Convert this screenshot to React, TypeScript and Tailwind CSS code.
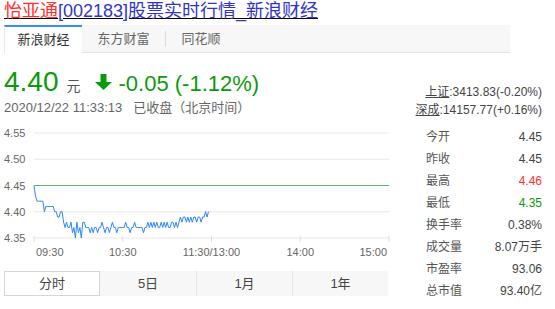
import React from "react";

const GREEN = "#0b9a0b";

// minute prices, cents below 4.45 (09:30 → ~11:29)
const drops = [
  0, 2, 3, 3, 3, 3, 3, 5, 4, 4,
  4, 4, 4, 4, 5, 5, 6, 6, 5, 5,
  7, 8, 7, 8, 8, 7, 9, 8, 10, 7,
  9, 8, 10, 7, 7, 8, 8, 8, 9, 8,
  9, 8, 8, 9, 8, 8, 7, 8, 9, 8,
  8, 9, 8, 7, 8, 8, 9, 8, 8, 8,
  8, 8, 7, 8, 8, 9, 8, 8, 7, 8,
  8, 8, 8, 8, 9, 8, 8, 7, 8, 7,
  8, 7, 8, 7, 8, 8, 7, 8, 7, 8,
  7, 8, 8, 7, 7, 8, 7, 8, 7, 6,
  7, 6, 6, 7, 6, 7, 6, 7, 6, 6,
  7, 6, 6, 7, 6, 6, 5, 6, 5,
];

const X0 = 34;
const X1 = 389;
const yOf = (p: number) => 13 + ((4.55 - p) / 0.05) * 26.25;
const xOf = (m: number) => X0 + (m * (X1 - X0)) / 240;

const stats: { label: string; value: string; color?: string }[] = [
  { label: "今开", value: "4.45" },
  { label: "昨收", value: "4.45" },
  { label: "最高", value: "4.46", color: "text-[#ff3030]" },
  { label: "最低", value: "4.35", color: "text-[#0b9a0b]" },
  { label: "换手率", value: "0.38%" },
  { label: "成交量", value: "8.07万手" },
  { label: "市盈率", value: "93.06" },
  { label: "总市值", value: "93.40亿" },
];

function MinuteChart() {
  const pts = drops
    .map((d, i) => `${xOf(i).toFixed(1)},${yOf(4.45 - d / 100).toFixed(1)}`)
    .join(" ");
  const levels = [4.55, 4.5, 4.45, 4.4, 4.35];
  const ticks = [0, 60, 120, 180, 240].map(xOf);

  return (
    <svg width={390} height={140} className="mt-[3px] block">
      {levels.map((p) => (
        <g key={p}>
          <line
            x1={X0}
            x2={X1}
            y1={yOf(p)}
            y2={yOf(p)}
            stroke={p === 4.45 ? "#62b562" : "#e8e8e8"}
            strokeWidth={1}
          />
          <text x={4} y={yOf(p) + 4} fontSize={11} fill="#666">
            {p.toFixed(2)}
          </text>
        </g>
      ))}
      {ticks.map((x) => (
        <line key={x} x1={x} x2={x} y1={116} y2={122} stroke="#ddd" />
      ))}
      <polyline points={pts} fill="none" stroke="#2f86f6" strokeWidth={1} />
      <g fontSize={11} fill="#666">
        <text x={36} y={136}>09:30</text>
        <text x={ticks[1]} y={136} textAnchor="middle">10:30</text>
        <text x={ticks[2]} y={136} textAnchor="middle">11:30/13:00</text>
        <text x={ticks[3]} y={136} textAnchor="middle">14:00</text>
        <text x={387} y={136} textAnchor="end">15:00</text>
      </g>
    </svg>
  );
}

export default function App() {
  return (
    <div className="h-[309px] w-[555px] overflow-hidden bg-white font-['Liberation_Sans','Noto_Sans_CJK_SC',sans-serif]">
      {/* Title */}
      <div className="h-[22px] pl-[4px] text-[18px] leading-[22px] underline">
        <span className="text-[#ff2f2f]">怡亚通</span>
        <span className="text-[#3434c4]">[002183]股票实时行情_新浪财经</span>
      </div>

      {/* Source tabs */}
      <div className="mx-[4px] mt-[3px] flex h-[28px] w-[506px] border-b border-[#e2e2e2] bg-[#f7f7f7] text-[13px] text-[#666]">
        <div className="flex h-[28px] w-[78px] items-center justify-center border-t-2 border-l border-[#3a8fe6] border-l-[#e8e8e8] bg-white text-[#333]">
          新浪财经
        </div>
        <div className="flex w-[83px] items-center justify-center">东方财富</div>
        <div className="h-[16px] w-px self-center bg-[#dcdcdc]" />
        <div className="flex w-[70px] items-center justify-center">同花顺</div>
      </div>

      <div className="flex">
        {/* Left: quote + chart */}
        <div className="w-[390px]">
          <div className="mt-[12px] flex h-[34px] items-baseline pl-[4px]">
            <span className="text-[28px] leading-[34px] text-[#0b9a0b]">4.40</span>
            <span className="ml-[8px] text-[14px] text-[#555]">元</span>
            <svg width={17} height={16} viewBox="0 0 17 16" className="ml-[14px] self-center">
              <path d="M5.5 0h6v8h5.5L8.5 16L0 8h5.5z" fill={GREEN} />
            </svg>
            <span className="ml-[7px] text-[22px] text-[#0b9a0b]">-0.05 (-1.12%)</span>
          </div>
          <div className="h-[18px] pl-[4px] text-[13px] leading-[18px] text-[#666]">
            2020/12/22 11:33:13
            <span className="ml-[11px]">已收盘（北京时间）</span>
          </div>

          <MinuteChart />

          <div className="ml-[4px] mt-[11px] flex h-[25px] w-[384px] bg-[#f7f7f7] text-[13px] text-[#444]">
            <div className="flex w-[96px] items-center justify-center border border-[#d6d6d6] bg-white">
              分时
            </div>
            <div className="flex w-[96px] items-center justify-center">5日</div>
            <div className="flex w-[96px] items-center justify-center border-l border-[#e6e6e6]">1月</div>
            <div className="flex w-[96px] items-center justify-center border-l border-[#e6e6e6]">1年</div>
          </div>
        </div>

        {/* Right: indices + stats */}
        <div className="ml-[22px] mt-[30px] w-[130px] whitespace-nowrap text-[12px] text-[#444]">
          <div className="h-[18px] text-right leading-[18px]">
            <span className="underline">上证</span>:3413.83(-0.20%)
          </div>
          <div className="h-[18px] text-right leading-[18px]">
            <span className="underline">深成</span>:14157.77(+0.16%)
          </div>
          <div className="mt-[7px]">
            {stats.map((s) => (
              <div key={s.label} className="flex h-[22px] items-center justify-between pl-[14px]">
                <span className="text-[#555]">{s.label}</span>
                <span className={s.color ?? "text-[#444]"}>{s.value}</span>
              </div>
            ))}
          </div>
        </div>
      </div>
    </div>
  );
}
